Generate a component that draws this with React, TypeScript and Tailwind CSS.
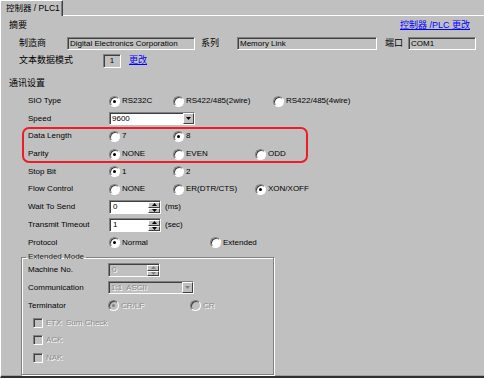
import clsx from "clsx";

const sunken =
  "border border-t-[#808080] border-l-[#808080] border-r-white border-b-white shadow-[inset_1px_1px_0_#404040]";
const raised =
  "bg-[#c0c0c0] border border-t-white border-l-white border-r-[#404040] border-b-[#404040]";
const dim = "text-[#8c8c8c] [text-shadow:1px_1px_0_#fff]";

type RadioProps = { label: string; checked?: boolean; disabled?: boolean; className?: string };

const Radio = ({ label, checked, disabled, className }: RadioProps) => (
  <span className={clsx("flex items-center", className)}>
    <span
      className={clsx(
        "relative w-[11px] h-[11px] rounded-full",
        sunken,
        disabled ? "bg-[#c0c0c0]" : "bg-white"
      )}
    >
      {checked && (
        <span
          className={clsx(
            "absolute left-[3px] top-[3px] w-[3px] h-[3px] rounded-full",
            disabled ? "bg-[#808080]" : "bg-black"
          )}
        />
      )}
    </span>
    <span className={clsx("ml-[2px] whitespace-nowrap", disabled && dim)}>{label}</span>
  </span>
);

const Arrow = ({ down, disabled }: { down?: boolean; disabled?: boolean }) => (
  <svg width="5" height="3" viewBox="0 0 5 3" className="block">
    <path
      d={down ? "M0 0H5L2.5 3Z" : "M0 3H5L2.5 0Z"}
      fill={disabled ? "#808080" : "#000"}
    />
  </svg>
);

const Spin = ({ value, disabled }: { value: string; disabled?: boolean }) => (
  <div
    className={clsx(
      "flex w-[52px] h-[14px]",
      sunken,
      disabled ? "bg-[#c0c0c0]" : "bg-white"
    )}
  >
    <span className={clsx("flex-1 pl-[3px] leading-[12px]", disabled && dim)}>{value}</span>
    <div className="flex flex-col w-[12px] mt-[1px]">
      <span className={clsx("flex h-[6px] items-center justify-center", raised)}>
        <Arrow disabled={disabled} />
      </span>
      <span className={clsx("flex h-[6px] items-center justify-center", raised)}>
        <Arrow down disabled={disabled} />
      </span>
    </div>
  </div>
);

const Select = ({ value, disabled }: { value: string; disabled?: boolean }) => (
  <div
    className={clsx(
      "flex w-[86px] h-[13px]",
      sunken,
      disabled ? "bg-[#c0c0c0]" : "bg-white"
    )}
  >
    <span className={clsx("flex-1 pl-[2px] leading-[11px] whitespace-pre", disabled && dim)}>{value}</span>
    <span className={clsx("flex w-[11px] items-center justify-center", raised)}>
      <Arrow down disabled={disabled} />
    </span>
  </div>
);

const Check = ({ label }: { label: string }) => (
  <span className="flex items-center">
    <span className={clsx("w-[10px] h-[10px] bg-[#c0c0c0]", sunken)} />
    <span className={clsx("ml-[3px] whitespace-pre", dim)}>{label}</span>
  </span>
);

const Row = ({ label, h, children }: { label: string; h: string; children?: React.ReactNode }) => (
  <div className={clsx("flex items-center pl-[27px]", h)}>
    <span className="w-[81px]">{label}</span>
    {children}
  </div>
);

const Field = ({ value, w }: { value: string; w: string }) => (
  <span className={clsx("h-[13px] pl-[2px] leading-[11px] bg-[#c0c0c0] whitespace-nowrap", sunken, w)}>{value}</span>
);

export default function App() {
  return (
    <div className="relative w-[484px] h-[378px] overflow-hidden bg-[#c0c0c0] text-[8px] text-black font-['Liberation_Sans','Noto_Sans_CJK_SC',sans-serif]">
      {/* tab strip */}
      <div className="flex h-[16px]">
        <div className="w-[63px] h-[16px] border-t border-l border-white border-r border-r-[#404040] shadow-[inset_-1px_0_0_#808080] pl-[5px] text-[8.5px] leading-[14px] whitespace-nowrap">
          控制器 / PLC1
        </div>
        <div className="flex-1 border-b border-white" />
      </div>

      <div className="flex flex-col h-[362px] border-l border-white border-b-2 border-b-[#303030] shadow-[inset_0_-1px_0_#a0a0a0]">
        <div className="flex items-center h-[20px] pl-[8px] pr-[14px]">
          <span className="text-[9px]">摘要</span>
          <a className="ml-auto text-[9px] text-[#0000ff] underline">控制器 /PLC 更改</a>
        </div>

        <div className="flex items-center h-[13px] mt-[1px] pl-[18px]">
          <span className="w-[48px] text-[9px]">制造商</span>
          <Field value="Digital Electronics Corporation" w="w-[128px]" />
          <span className="w-[36px] ml-[6px] text-[9px]">系列</span>
          <Field value="Memory Link" w="w-[140px]" />
          <span className="w-[23px] ml-[8px] text-[9px]">端口</span>
          <Field value="COM1" w="w-[68px]" />
        </div>

        <div className="flex items-center h-[14px] mt-[4px] pl-[18px]">
          <span className="w-[84px] text-[9px]">文本数据模式</span>
          <span className={clsx("w-[18px] h-[14px] text-center leading-[12px]", sunken)}>1</span>
          <a className="ml-[8px] text-[9px] text-[#0000ff] underline">更改</a>
        </div>

        <div className="flex items-center h-[16px] mt-[8px] pl-[8px] text-[9px]">通讯设置</div>

        <Row label="SIO Type" h="h-[18px]">
          <Radio label="RS232C" checked className="w-[64px]" />
          <Radio label="RS422/485(2wire)" className="w-[100px]" />
          <Radio label="RS422/485(4wire)" />
        </Row>
        <Row label="Speed" h="h-[17px]">
          <Select value="9600" />
        </Row>
        <Row label="Data Length" h="h-[18px]">
          <Radio label="7" className="w-[64px]" />
          <Radio label="8" checked />
        </Row>
        <Row label="Parity" h="h-[18px]">
          <Radio label="NONE" checked className="w-[64px]" />
          <Radio label="EVEN" className="w-[82px]" />
          <Radio label="ODD" />
        </Row>
        <Row label="Stop Bit" h="h-[17px]">
          <Radio label="1" checked className="w-[64px]" />
          <Radio label="2" />
        </Row>
        <Row label="Flow Control" h="h-[18px]">
          <Radio label="NONE" className="w-[64px]" />
          <Radio label="ER(DTR/CTS)" className="w-[82px]" />
          <Radio label="XON/XOFF" checked />
        </Row>
        <Row label="Wait To Send" h="h-[18px]">
          <Spin value="0" />
          <span className="ml-[4px]">(ms)</span>
        </Row>
        <Row label="Transmit Timeout" h="h-[18px]">
          <Spin value="1" />
          <span className="ml-[4px]">(sec)</span>
        </Row>
        <Row label="Protocol" h="h-[17px]">
          <Radio label="Normal" checked className="w-[101px]" />
          <Radio label="Extended" />
        </Row>

        <fieldset className="ml-[20px] w-[253px] h-[124px] p-0 border border-[#808080] shadow-[inset_1px_1px_0_#fff,1px_1px_0_#fff]">
          <legend className="ml-[4px] px-[2px] leading-[12px] text-[#222]">Extended Mode</legend>
          <div className="flex flex-col pl-[6px]">
            <div className="flex items-center h-[14px]">
              <span className="w-[80px]">Machine No.</span>
              <Spin value="0" disabled />
            </div>
            <div className="flex items-center h-[13px] mt-[4px]">
              <span className="w-[80px]">Communication</span>
              <Select value="1:1  ASCII" disabled />
            </div>
            <div className="flex items-center h-[17px] mt-[3px]">
              <span className="w-[80px]">Terminator</span>
              <Radio label="CR/LF" checked disabled className="w-[82px]" />
              <Radio label="CR" disabled />
            </div>
            <div className="flex items-center h-[17px] pl-[5px]">
              <Check label="ETX  Sum Check" />
            </div>
            <div className="flex items-center h-[18px] pl-[5px]">
              <Check label="ACK" />
            </div>
            <div className="flex items-center h-[18px] pl-[5px]">
              <Check label="NAK" />
            </div>
          </div>
        </fieldset>
      </div>

      {/* red annotation frame */}
      <div className="absolute left-[22px] top-[127px] w-[286px] h-[36px] border-2 border-[#ee1c24] rounded-[7px]" />
    </div>
  );
}
